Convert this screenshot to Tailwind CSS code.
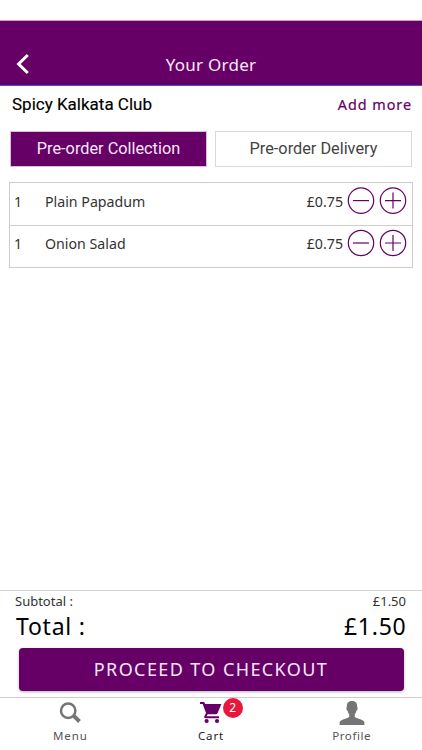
<!DOCTYPE html>
<html lang="en">
<head>
<meta charset="utf-8">
<title>Your Order</title>
<script src="https://cdn.jsdelivr.net/npm/@tailwindcss/browser@4"></script>
</head>
<body class="bg-white">
<div class="flex h-[750px] w-[422px] flex-col overflow-hidden bg-white pt-5 font-['Noto_Sans',sans-serif] text-[#333]">
  <header class="grid h-[66px] shrink-0 grid-cols-[60px_1fr_60px] border-t border-b border-t-[#c9a3c9] border-b-[#6a45b0] bg-[#660066] pt-[21px] shadow-[inset_0_-1px_0_#45107a]">
    <button class="flex h-[43px] items-center pl-4" aria-label="Back">
      <svg class="h-[22px] w-[14px]" viewBox="0 0 14 22" fill="none" stroke="#fff" stroke-width="3"><path d="M11.8 2 L2.6 11 L11.8 20"/></svg>
    </button>
    <h1 class="flex h-[45px] items-center justify-center text-[17px] tracking-[0.25px] whitespace-nowrap text-[#f8e8f8]">Your Order</h1>
  </header>

  <div class="flex h-[45px] shrink-0 items-start justify-between pr-[10px] pl-3">
    <h2 class="pt-[6px] font-['Roboto',sans-serif] text-[17px] leading-6 text-black [-webkit-text-stroke:0.15px_black]">Spicy Kalkata Club</h2>
    <a class="pt-[7px] text-[14.4px] leading-6 tracking-[0.95px] text-[#660066] [-webkit-text-stroke:0.2px_#660066]">Add more</a>
  </div>

  <div class="flex h-9 shrink-0 gap-[8px] pr-[10px] pl-[10px] font-['Roboto',sans-serif] text-[16.3px]">
    <button class="flex w-[197px] items-center justify-center border border-[#d9bfd9] bg-[#660066] text-[#f8e8f8]">Pre-order Collection</button>
    <button class="flex w-[197px] items-center justify-center border border-[#d9d9d9] text-[#444]">Pre-order Delivery</button>
  </div>

  <ul class="mt-[15px] ml-[9px] w-[404px] shrink-0 border border-[#ccc] text-[14.2px]">
    <li class="flex h-[43px] items-center border-b border-[#ccc] pr-[5px] pl-[4px] pb-[7px]">
      <span class="w-[31px] pt-[2px]">1</span><span class="grow pt-[2px]">Plain Papadum</span><span class="mr-[4px] pt-[2px]">£0.75</span>
      <svg class="mr-[4px] size-7" viewBox="0 0 28 28" fill="none" stroke="#660066" stroke-width="1.2"><circle cx="14" cy="13.6" r="12.7"/><path d="M6 13.6H22"/></svg>
      <svg class="size-7" viewBox="0 0 28 28" fill="none" stroke="#660066" stroke-width="1.2"><circle cx="14" cy="13.6" r="12.7"/><path d="M6 13.6H22M14 5.6V21.6"/></svg>
    </li>
    <li class="flex h-[41px] items-center pr-[5px] pl-[4px] pb-[7px]">
      <span class="w-[31px] pt-px">1</span><span class="grow pt-px">Onion Salad</span><span class="mr-[4px] pt-px">£0.75</span>
      <svg class="mr-[4px] size-7" viewBox="0 0 28 28" fill="none" stroke="#660066" stroke-width="1.2"><circle cx="14" cy="14" r="12.7"/><path d="M6 14H22"/></svg>
      <svg class="size-7" viewBox="0 0 28 28" fill="none" stroke="#660066" stroke-width="1.2"><circle cx="14" cy="14" r="12.7"/><path d="M6 14H22M14 6V22"/></svg>
    </li>
  </ul>

  <section class="mt-auto h-[107px] shrink-0 border-t border-[#d2d2d2]">
    <div class="flex h-[22px] items-center justify-between pr-4 pl-[15px] text-[13px]"><span>Subtotal :</span><span>£1.50</span></div>
    <div class="flex h-[27px] items-center justify-between pr-[15.5px] pl-4 text-[23px] tracking-[0.75px] text-black"><span>Total :</span><span>£1.50</span></div>
    <button class="mt-[8px] ml-[18.5px] flex h-[42.5px] w-[385px] items-center justify-center rounded-[4px] bg-[#660066] text-[18px] tracking-[1.4px] text-[#f8e8f8] shadow-[0_1px_3px_rgba(0,0,0,0.3)]">PROCEED TO CHECKOUT</button>
  </section>

  <nav class="grid h-[53px] shrink-0 grid-cols-3 border-t border-[#ccc] text-[11.5px] leading-4 tracking-[0.9px] text-[#555]">
    <a class="flex flex-col items-center pt-1">
      <svg class="h-[22px] w-[22px]" viewBox="0 0 22 22" fill="none" stroke="#757575"><circle cx="9.2" cy="8.7" r="7.2" stroke-width="2.5"/><path d="M14.5 13.6L20.5 19.5" stroke-width="4"/></svg>
      <span class="mt-1">Menu</span>
    </a>
    <a class="relative flex flex-col items-center pt-[3px] text-[#1b1b1b]">
      <svg class="h-[23px] w-[22px]" viewBox="0 0 22 23"><path fill="#660066" d="M0 1H4.1L5.2 3H21.4L17.5 12.2Q17 13.3 15.8 13.3H7.8L6.5 15.2H19V17.2H5.7Q4 17.2 4.1 15.8L6 12.1L2.7 3H0Z"/><circle cx="6.6" cy="20" r="2.1" fill="#660066"/><circle cx="17" cy="20" r="2.1" fill="#660066"/></svg>
      <span class="mt-1">Cart</span>
      <span class="absolute top-0 left-[82px] flex size-[20px] items-center justify-center rounded-full bg-[#e8173b] text-[12px] tracking-normal text-white">2</span>
    </a>
    <a class="flex flex-col items-center pt-[3px]">
      <svg class="h-[24px] w-[26px]" viewBox="0 0 26 24" fill="#757575"><path d="M13 0C16.7 0 18.5 2.4 18.1 5.7Q19 6.1 18.4 8.4Q18 9.5 17.4 9.7Q17 12 15.8 13.1V15.8Q16.6 17.1 22 18.6Q25.4 19.7 25.4 22V24H.6V22Q.6 19.7 4 18.6Q9.4 17.1 10.2 15.8V13.1Q9 12 8.6 9.7Q8 9.5 7.6 8.4Q7 6.1 7.9 5.7C7.5 2.4 9.3 0 13 0Z"/></svg>
      <span class="mt-[3px] tracking-[0.6px]">Profile</span>
    </a>
  </nav>
</div>
</body>
</html>
